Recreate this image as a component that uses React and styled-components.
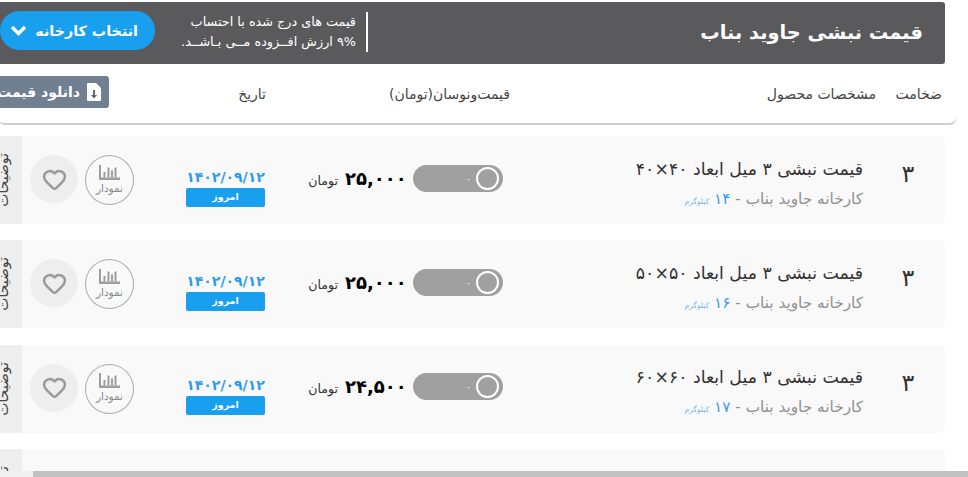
import styled, { createGlobalStyle } from "styled-components";
import { Heart } from "lucide-react";

const GlobalStyle = createGlobalStyle`
  html, body { margin: 0; padding: 0; background: #fff; }
  body { font-family: "DejaVu Sans", "Noto Sans", sans-serif; }
`;

const rows = [
  { title: "قیمت نبشی ۳ میل ابعاد ۴۰×۴۰", weight: "۱۴", price: "۲۵,۰۰۰" },
  { title: "قیمت نبشی ۳ میل ابعاد ۵۰×۵۰", weight: "۱۶", price: "۲۵,۰۰۰" },
  { title: "قیمت نبشی ۳ میل ابعاد ۶۰×۶۰", weight: "۱۷", price: "۲۴,۵۰۰" },
];

const ChartIcon = () => (
  <svg width="21" height="15" viewBox="0 0 21 15" fill="#9e9e9e">
    <rect x="0" y="0" width="2" height="15" />
    <rect x="0" y="12.5" width="21" height="2.5" />
    <rect x="4.5" y="7" width="2" height="5.5" />
    <rect x="8.5" y="2.5" width="2" height="10" />
    <rect x="12" y="5.5" width="2" height="7" />
    <rect x="15.5" y="2.5" width="2" height="10" />
  </svg>
);

const FileIcon = () => (
  <DownloadGlyph width="14" height="18" viewBox="0 0 14 18">
    <path d="M1 0h8l5 5v12a1 1 0 0 1-1 1H1a1 1 0 0 1-1-1V1a1 1 0 0 1 1-1z" fill="#fff" />
    <path d="M6 7h2v5h2.2L7 15.5 3.8 12H6z" fill="#5d6b7a" />
  </DownloadGlyph>
);

const Chevron = () => (
  <svg width="17" height="11" viewBox="0 0 17 11">
    <polyline points="2,2 8.5,8.5 15,2" fill="none" stroke="#fff" strokeWidth="3.4" />
  </svg>
);

export default function App() {
  return (
    <Page dir="rtl">
      <GlobalStyle />
      <Banner>
        <BannerTitle>قیمت نبشی جاوید بناب</BannerTitle>
        <BannerSide>
          <TaxNote>
            <div>قیمت های درج شده با احتساب</div>
            <div>۹% ارزش افــزوده مــی بـاشــد.</div>
          </TaxNote>
          <FactoryButton>
            انتخاب کارخانه
            <Chevron />
          </FactoryButton>
        </BannerSide>
      </Banner>

      <TableHead>
        <HeadCell $width={66}>ضخامت</HeadCell>
        <HeadCell $width={366}>مشخصات محصول</HeadCell>
        <HeadCell $width={244}>قیمت‌ونوسان(تومان)</HeadCell>
        <HeadCell $width={157}>تاریخ</HeadCell>
        <DownloadButton>
          <FileIcon />
          دانلود قیمت ها
        </DownloadButton>
      </TableHead>

      <RowList>
        {rows.map((row) => (
          <Row key={row.title}>
            <Thickness>۳</Thickness>
            <Spec>
              <SpecTitle>{row.title}</SpecTitle>
              <SpecSub>
                کارخانه جاوید بناب - <Kilo>{row.weight}</Kilo> <KiloUnit>کیلوگرم</KiloUnit>
              </SpecSub>
            </Spec>
            <Toggle>
              <Knob />
              <ToggleZero>۰</ToggleZero>
            </Toggle>
            <PriceCell>
              <Price>{row.price}</Price>
              <Unit>تومان</Unit>
            </PriceCell>
            <DateCell>
              <DateText>۱۴۰۲/۰۹/۱۲</DateText>
              <TodayBadge>امروز</TodayBadge>
            </DateCell>
            <ChartButton>
              <ChartIcon />
              <ChartLabel>نمودار</ChartLabel>
            </ChartButton>
            <LikeButton>
              <Heart size={25} color="#9a9a9a" strokeWidth={2.4} />
            </LikeButton>
            <DetailTab>
              <DetailLabel>توضیحات</DetailLabel>
            </DetailTab>
          </Row>
        ))}
        <Row>
          <Spacer />
          <DetailTab>
            <DetailLabel>توضیحات</DetailLabel>
          </DetailTab>
        </Row>
      </RowList>

      <ScrollTrack>
        <ScrollThumb />
      </ScrollTrack>
    </Page>
  );
}

const Page = styled.div`
  position: relative;
  width: 968px;
  height: 477px;
  overflow: hidden;
  box-sizing: border-box;
  padding: 2px 23px 0 0;
  color: #333;
`;

const Banner = styled.div`
  width: 945px;
  height: 62px;
  background: #5a5a5d;
  border-radius: 0 3px 3px 0;
  display: flex;
  align-items: center;
  justify-content: space-between;
  box-sizing: border-box;
  padding-right: 22px;
`;

const BannerTitle = styled.div`
  font-size: 19.4px;
  font-weight: 700;
  color: #fff;
  white-space: nowrap;
  margin-bottom: 2px;
`;

const BannerSide = styled.div`
  display: flex;
  align-items: center;
`;

const TaxNote = styled.div`
  height: 40px;
  width: 189px;
  margin-bottom: 2px;
  box-sizing: border-box;
  border-right: 2px solid #fff;
  padding-right: 10px;
  font-size: 12.8px;
  line-height: 20px;
  color: #fff;
  white-space: nowrap;
`;

const FactoryButton = styled.div`
  width: 155px;
  height: 39px;
  margin-right: 24px;
  margin-bottom: 5px;
  box-sizing: border-box;
  padding: 0 17px 0 10px;
  background: #18a0ef;
  border-radius: 20px;
  color: #fff;
  font-size: 14.3px;
  font-weight: 700;
  display: flex;
  align-items: center;
  justify-content: space-between;
  white-space: nowrap;
`;

const TableHead = styled.div`
  width: 960px;
  height: 61px;
  margin-right: -12px;
  box-sizing: border-box;
  border-bottom: 2px solid #cfcfcf;
  border-radius: 0 0 8px 8px;
  display: flex;
  align-items: center;
  padding-right: 15px;
`;

const HeadCell = styled.div`
  width: ${(p) => p.$width}px;
  flex: none;
  font-size: 14px;
  color: #444;
  white-space: nowrap;
  padding-top: 1px;
`;

const DownloadButton = styled.div`
  flex: none;
  margin-top: -3px;
  height: 32px;
  width: max-content;
  padding: 0 8px;
  box-sizing: border-box;
  background: #708090;
  border-radius: 3px;
  color: #fff;
  font-size: 14px;
  font-weight: 700;
  display: flex;
  align-items: center;
  gap: 7px;
  white-space: nowrap;
`;

const DownloadGlyph = styled.svg`
  flex: none;
`;

const RowList = styled.div`
  display: flex;
  flex-direction: column;
  gap: 16.33px;
  margin-top: 11px;
`;

const Row = styled.div`
  flex: none;
  width: 961px;
  height: 88px;
  background: #f9f9f9;
  border-radius: 0 6px 6px 0;
  display: flex;
  align-items: center;
`;

const Thickness = styled.div`
  width: 82px;
  flex: none;
  box-sizing: border-box;
  padding-left: 8px;
  margin-bottom: 12px;
  text-align: center;
  font-size: 24px;
  font-weight: 400;
`;

const Spec = styled.div`
  width: 360px;
  flex: none;
  padding-top: 10px;
  white-space: nowrap;
`;

const SpecTitle = styled.div`
  font-size: 17.3px;
  color: #333;
  line-height: 24px;
`;

const SpecSub = styled.div`
  font-size: 15.3px;
  color: #8f8f8f;
  line-height: 24px;
  margin-top: 6px;
`;

const Kilo = styled.span`
  color: #3a9cf0;
`;

const KiloUnit = styled.span`
  color: #7fb4ee;
  font-size: 7.5px;
`;

const Toggle = styled.div`
  position: relative;
  width: 90px;
  height: 27px;
  flex: none;
  margin-bottom: 4px;
  background: #a0a0a0;
  border-radius: 14px;
  display: flex;
  align-items: center;
  box-sizing: border-box;
  padding-right: 4px;
`;

const Knob = styled.div`
  width: 19px;
  height: 19px;
  border: 2px solid #fff;
  border-radius: 50%;
`;

const ToggleZero = styled.div`
  color: #fff;
  font-size: 10px;
  margin-right: 5px;
`;

const PriceCell = styled.div`
  width: 111px;
  flex: none;
  margin-bottom: 4px;
  display: flex;
  align-items: center;
  justify-content: center;
  gap: 7px;
`;

const Price = styled.div`
  font-size: 18px;
  font-weight: 700;
  color: #000;
`;

const Unit = styled.div`
  font-size: 12.5px;
  color: #333;
  padding-top: 4px;
`;

const DateCell = styled.div`
  width: 79px;
  flex: none;
  margin-right: 37px;
  display: flex;
  flex-direction: column;
  align-items: stretch;
  padding-top: 14px;
`;

const DateText = styled.div`
  color: #2d9cee;
  font-size: 14px;
  font-weight: 700;
  text-align: center;
  line-height: 18px;
`;

const TodayBadge = styled.div`
  height: 19px;
  margin-top: 2px;
  background: #18a0ef;
  border-radius: 2px;
  color: #fff;
  font-size: 9.5px;
  font-weight: 700;
  text-align: center;
  line-height: 17px;
`;

const ChartButton = styled.div`
  width: 49px;
  height: 50px;
  flex: none;
  margin-right: 52px;
  box-sizing: border-box;
  border: 1px solid #aaa;
  border-radius: 50%;
  display: flex;
  flex-direction: column;
  align-items: center;
  justify-content: center;
`;

const ChartLabel = styled.div`
  font-size: 10.5px;
  color: #888;
  line-height: 16px;
`;

const LikeButton = styled.div`
  width: 48px;
  height: 48px;
  flex: none;
  margin-right: 7px;
  margin-bottom: 2px;
  background: #eee;
  border-radius: 50%;
  display: flex;
  align-items: center;
  justify-content: center;
`;

const Spacer = styled.div`
  flex: 1;
`;

const DetailTab = styled.div`
  width: 38px;
  height: 88px;
  flex: none;
  margin-right: 8px;
  background: #eee;
  display: flex;
  align-items: center;
  justify-content: center;
`;

const DetailLabel = styled.div`
  writing-mode: vertical-rl;
  transform: rotate(180deg);
  font-size: 14px;
  color: #444;
  white-space: nowrap;
`;

const ScrollTrack = styled.div`
  position: absolute;
  left: 0;
  right: 0;
  bottom: 0;
  height: 6px;
  background: #f1f1f1;
`;

const ScrollThumb = styled.div`
  position: absolute;
  left: 33px;
  right: 0;
  top: 0;
  bottom: 0;
  background: #c1c1c1;
`;
